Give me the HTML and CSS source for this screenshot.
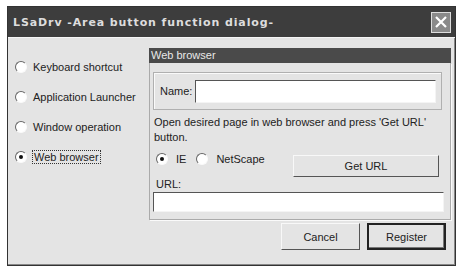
FILE: index.html
```html
<!DOCTYPE html>
<html lang="en">
<head>
  <meta charset="UTF-8">
  <title>LSaDrv - Area button function dialog</title>
  <link rel="stylesheet" href="styles.css">
</head>
<body>
  <div class="window">
    <div class="titlebar">
      <span class="title">LSaDrv -Area button function dialog-</span>
      <span class="close">
        <svg width="14" height="14" viewBox="0 0 14 14"><path d="M2 2 L12 12 M12 2 L2 12" stroke="#fff" stroke-width="2.2"/></svg>
      </span>
    </div>

    <div class="content">
      <div class="modes">
        <label class="opt"><span class="radio"></span>Keyboard shortcut</label>
        <label class="opt"><span class="radio"></span>Application Launcher</label>
        <label class="opt"><span class="radio"></span>Window operation</label>
        <label class="opt"><span class="radio on"></span><span class="focus">Web browser</span></label>
      </div>

      <div class="group">
        <div class="group-head">Web browser</div>
        <div class="group-body">
          <div class="name-box">
            <span>Name:</span>
            <span class="field name-field"></span>
          </div>
          <p class="hint">Open desired page in web browser and press 'Get URL' button.</p>
          <div class="browser-row">
            <label class="opt small"><span class="radio on"></span>IE</label>
            <label class="opt small"><span class="radio"></span>NetScape</label>
            <span class="btn get-url">Get URL</span>
          </div>
          <div class="url-label">URL:</div>
          <span class="field url-field"></span>
        </div>
        <div class="actions">
          <span class="btn">Cancel</span>
          <span class="btn default">Register</span>
        </div>
      </div>
    </div>
  </div>
</body>
</html>
```

FILE: styles.css
```css
body { margin: 0; background: #fff; font-family: "Liberation Sans", Arial, sans-serif; font-size: 11px; color: #222; }

.window { margin: 6px 0 0 7px; width: 447px; height: 258px; border: 1px solid #333; background: #e4e4e4; box-shadow: inset -1px -1px 0 #888; }

.titlebar { height: 30px; background: #3d3d3d; display: flex; align-items: center; padding: 0 4px 0 5px; border-bottom: 1px solid #f4f4f4; }
.title { font-family: "DejaVu Sans", sans-serif; font-weight: bold; font-size: 11px; letter-spacing: 0.9px; color: #ddd; }
.close { margin-left: auto; width: 18px; height: 19px; border: 1px solid #ddd; background: #8a8a8a; display: flex; align-items: center; justify-content: center; }

.content { display: flex; padding: 10px 0 0 0; }

.modes { width: 140px; display: flex; flex-direction: column; gap: 15px; padding: 11px 0 0 7px; box-sizing: border-box; }
.opt { display: flex; align-items: center; gap: 6px; height: 15px; }
.radio { width: 10px; height: 10px; border-radius: 50%; background: #fff; border: 1px solid; border-color: #666 #fafafa #fafafa #666; display: flex; align-items: center; justify-content: center; flex: none; }
.radio.on::after { content: ""; width: 4px; height: 4px; border-radius: 50%; background: #111; }
.focus { outline: 1px dotted #333; padding: 0 1px; }

.group { width: 302px; margin-left: 1px; }
.group-head { height: 15px; line-height: 15px; background: #4a4a4a; color: #e8e8e8; padding-left: 2px; }
.group-body { border: 1px solid #aaa; border-top: none; box-shadow: 1px 1px 0 #fafafa; padding: 9px 6px 5px 3px; height: 142px; }

.name-box { display: flex; align-items: center; gap: 1px; height: 36px; border: 1px solid #b0b0b0; box-shadow: inset 1px 1px 0 #fafafa; padding: 0 5px 0 6px; margin-right: 2px; }
.field { display: block; background: #fff; border: 1px solid; border-color: #555 #f4f4f4 #f4f4f4 #555; box-sizing: border-box; }
.name-field { flex: 1; height: 23px; margin-left: 2px; }

.hint { margin: 5px 0 0 1px; line-height: 15px; width: 290px; }

.browser-row { display: flex; align-items: flex-start; margin-top: 3px; padding-left: 3px; }
.opt.small { gap: 8px; margin-right: 10px; margin-top: 3px; }
.get-url { margin-left: auto; width: 146px; height: 22px; margin-top: 7px; margin-right: 5px; }

.btn { display: flex; align-items: center; justify-content: center; background: #e4e4e4; border: 1px solid; border-color: #f8f8f8 #555 #555 #f8f8f8; box-sizing: border-box; }

.url-label { margin: 1px 0 0 3px; line-height: 13px; }
.url-field { height: 20px; margin-top: 1px; }

.actions { display: flex; justify-content: flex-end; gap: 7px; margin-top: 3px; padding-right: 5px; }
.actions .btn { width: 79px; height: 27px; }
.btn.default { border: 2px solid #222; box-shadow: inset -1px -1px 0 #777; }
```
